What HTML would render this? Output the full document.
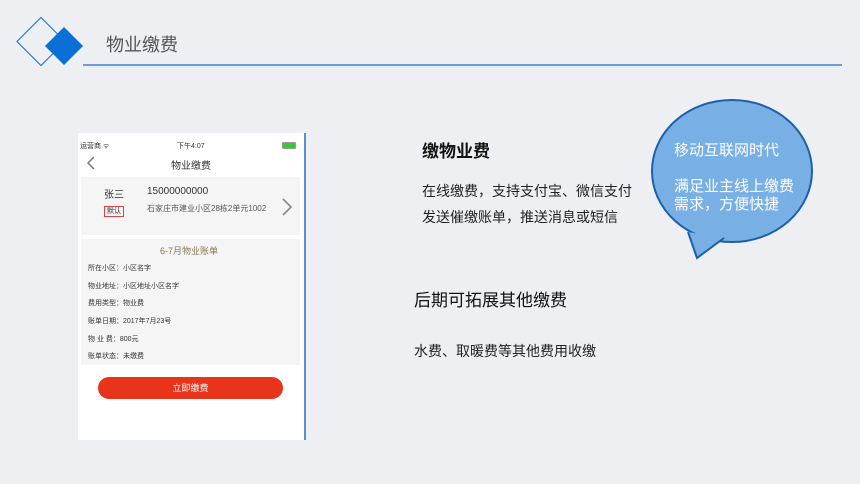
<!DOCTYPE html>
<html><head><meta charset="utf-8"><style>
body{margin:0;width:860px;height:484px;background:#eeeff3;position:relative;overflow:hidden;font-family:"Liberation Sans","Noto Sans CJK SC",sans-serif;}
.a{position:absolute;white-space:nowrap;}
.ph{position:absolute;left:78px;top:133px;width:226px;height:307px;background:#fff;border-right:2px solid #5b8fd0;}
.ph .a{color:#333;}
</style></head><body>
<svg class="a" style="left:0;top:0" width="860" height="80">
<polygon points="41,17.5 65,41.5 41,65.5 17,41.5" fill="none" stroke="#2a7ad6" stroke-width="1.2"/>
<polygon points="64,27 83,46 64,65 45,46" fill="#0a6fd6"/>
<line x1="83" y1="65" x2="842" y2="65" stroke="#3b86d6" stroke-width="1.5"/>
</svg>
<div class="a" style="left:106px;top:31px;font-size:18px;color:#555">物业缴费</div>

<div class="ph">
<div class="a" style="left:2px;top:8px;font-size:7px">运营商 ᯤ</div>
<div class="a" style="left:99px;top:8px;font-size:7px">下午4:07</div>
<div class="a" style="left:204px;top:9px;width:12px;height:5px;background:#3c3;border:1px solid #999;border-radius:1px"></div>
<svg class="a" style="left:8px;top:22px" width="10" height="16"><path d="M8,2 L2,8 L8,14" fill="none" stroke="#777" stroke-width="1.5"/></svg>
<div class="a" style="left:93px;top:24px;font-size:10px">物业缴费</div>
<div class="a" style="left:3px;top:44px;width:219px;height:58px;background:#f5f5f5"></div>
<div class="a" style="left:26px;top:53px;font-size:10px">张三</div>
<div class="a" style="left:26px;top:73px;font-size:7px;border:1px solid #d44;padding:0 2px;line-height:9px">默认</div>
<div class="a" style="left:69px;top:53px;font-size:10px">15000000000</div>
<div class="a" style="left:69px;top:70px;font-size:8px;color:#555">石家庄市建业小区28栋2单元1002</div>
<svg class="a" style="left:203px;top:64px" width="12" height="20"><path d="M2,2 L10,10 L2,18" fill="none" stroke="#888" stroke-width="1.6"/></svg>
<div class="a" style="left:3px;top:106px;width:219px;height:126px;background:#f5f5f5"></div>
<div class="a" style="left:82px;top:111px;font-size:9px;color:#875">6-7月物业账单</div>
<div class="a" style="left:10px;top:130px;font-size:7px">所在小区：小区名字</div>
<div class="a" style="left:10px;top:148px;font-size:7px">物业地址：小区地址小区名字</div>
<div class="a" style="left:10px;top:165px;font-size:7px">费用类型：物业费</div>
<div class="a" style="left:10px;top:183px;font-size:7px">账单日期：2017年7月23号</div>
<div class="a" style="left:10px;top:201px;font-size:7px">物 业 费：800元</div>
<div class="a" style="left:10px;top:218px;font-size:7px">账单状态：未缴费</div>
<div class="a" style="left:20px;top:244px;width:185px;height:22px;border-radius:11px;background:#e8341a;color:#fff;font-size:9px;text-align:center;line-height:22px">立即缴费</div>
</div>

<div class="a" style="left:422px;top:137px;font-size:17px;font-weight:bold;color:#111">缴物业费</div>
<div class="a" style="left:422px;top:181px;font-size:14px;color:#222">在线缴费，支持支付宝、微信支付</div>
<div class="a" style="left:422px;top:207px;font-size:14px;color:#222">发送催缴账单，推送消息或短信</div>
<div class="a" style="left:414px;top:286px;font-size:17px;color:#111">后期可拓展其他缴费</div>
<div class="a" style="left:414px;top:341px;font-size:14px;color:#222">水费、取暖费等其他费用收缴</div>

<svg class="a" style="left:0;top:0" width="860" height="484">
<ellipse cx="732" cy="171" rx="80" ry="71" fill="#78b0e6" stroke="#1d5fa8" stroke-width="2"/>
<polygon points="688,232 697,258 724,238" fill="#78b0e6"/>
<polyline points="688,232 697,258 724,238" fill="none" stroke="#1d5fa8" stroke-width="2"/>
</svg>
<div class="a" style="left:674px;top:139px;font-size:15px;color:#fff">移动互联网时代</div>
<div class="a" style="left:674px;top:178px;font-size:15px;color:#fff;line-height:18px">满足业主线上缴费<br>需求，方便快捷</div>
</body></html>
